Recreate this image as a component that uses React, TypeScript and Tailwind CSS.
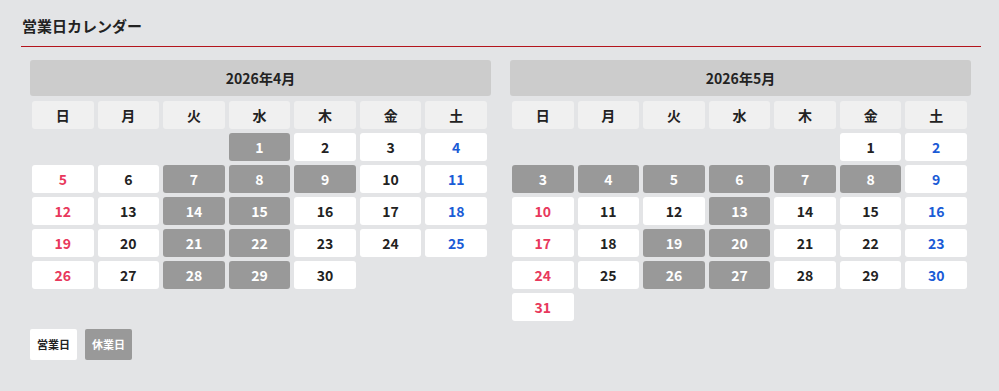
import React from "react";

type Month = { title: string; startDow: number; days: number; closed: number[] };

const months: Month[] = [
  { title: "2026年4月", startDow: 3, days: 30, closed: [1, 7, 8, 9, 14, 15, 21, 22, 28, 29] },
  { title: "2026年5月", startDow: 5, days: 31, closed: [3, 4, 5, 6, 7, 8, 13, 19, 20, 26, 27] },
];

const dows = ["日", "月", "火", "水", "木", "金", "土"];

function Calendar({ m }: { m: Month }) {
  const cells: (number | null)[] = [];
  for (let i = 0; i < m.startDow; i++) cells.push(null);
  for (let d = 1; d <= m.days; d++) cells.push(d);
  return (
    <div className="w-[461px]">
      <div className="h-[36px] bg-[#cccccc] rounded-[3px] flex items-center justify-center text-[14px] font-bold text-[#222222]">
        {m.title}
      </div>
      <div className="mt-[5px] pl-[2px] pr-[4px] grid grid-cols-7 gap-[4px]">
        {dows.map((d) => (
          <div
            key={d}
            className="h-[28px] bg-[#f0f0f0] rounded-[3px] flex items-center justify-center text-[14px] font-bold text-[#222222]"
          >
            {d}
          </div>
        ))}
        {cells.map((d, i) => {
          if (d === null) return <div key={"e" + i} className="h-[28px]" />;
          const dow = i % 7;
          const closed = m.closed.includes(d);
          let cls = "h-[28px] rounded-[3px] flex items-center justify-center text-[14px] font-bold ";
          if (closed) cls += "bg-[#999999] text-white";
          else if (dow === 0) cls += "bg-white text-[#e8385c]";
          else if (dow === 6) cls += "bg-white text-[#1a5bd6]";
          else cls += "bg-white text-[#222222]";
          return (
            <div key={d} className={cls}>
              {d}
            </div>
          );
        })}
      </div>
    </div>
  );
}

export default function App() {
  return (
    <div
      className="w-[999px] h-[391px] bg-[#e3e4e6] pl-[21px] pr-[18px] overflow-hidden"
      style={{ fontFamily: '"Noto Sans CJK JP", "Noto Sans", sans-serif' }}
    >
      <div className="pt-[14px] pb-[8px] pl-[1px] text-[15px] leading-[24px] font-bold text-[#222222]">
        営業日カレンダー
      </div>
      <div className="h-[1px] bg-[#b3141c]" />
      <div className="pl-[9px] pt-[13px]">
        <div className="flex gap-[19px] items-start">
          {months.map((m) => (
            <Calendar key={m.title} m={m} />
          ))}
        </div>
        <div className="mt-[8px] flex gap-[8px]">
          <div className="w-[47px] h-[31px] bg-white rounded-[2px] flex items-center justify-center text-[11px] font-bold text-[#222222]">
            営業日
          </div>
          <div className="w-[47px] h-[31px] bg-[#999999] rounded-[2px] flex items-center justify-center text-[11px] font-bold text-white">
            休業日
          </div>
        </div>
      </div>
    </div>
  );
}
